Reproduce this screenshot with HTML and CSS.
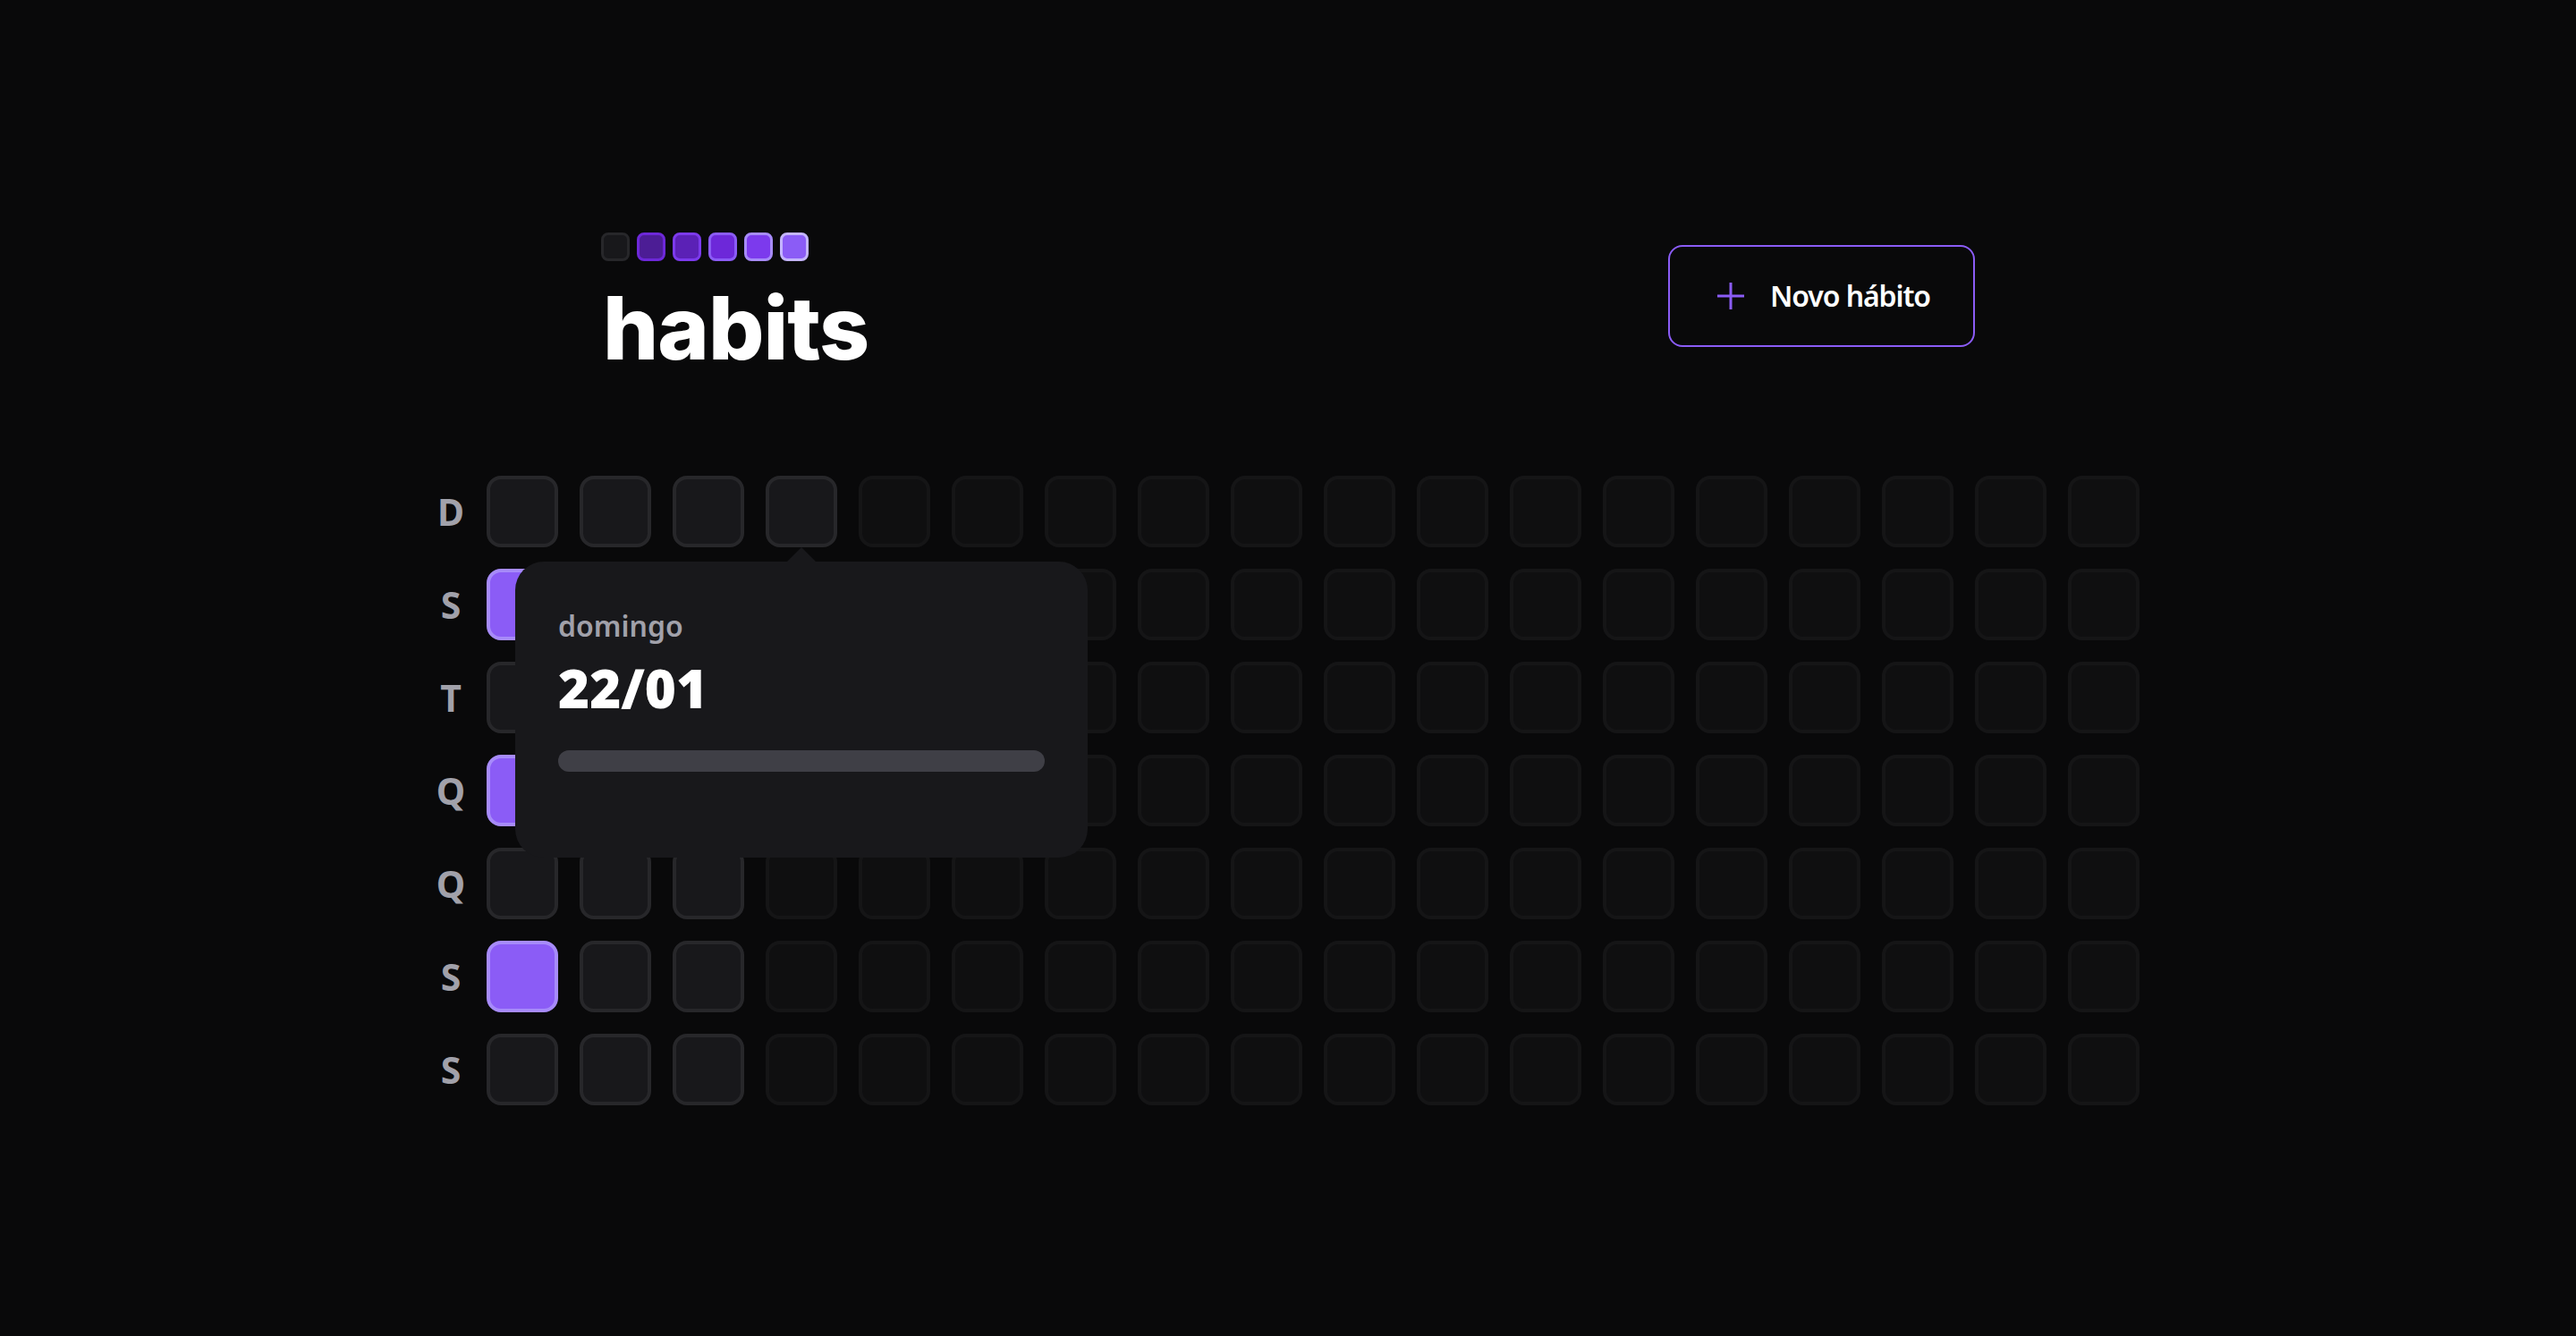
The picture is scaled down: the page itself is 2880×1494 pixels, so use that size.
FILE: index.html
```html
<!DOCTYPE html>
<html lang="pt-BR">
<head>
<meta charset="utf-8">
<title>habits</title>
<link rel="stylesheet" href="styles.css">
</head>
<body>
<main class="app">
  <header class="header">
    <div class="logo">
      <div class="logo-squares">
        <span class="sq sq-0"></span>
        <span class="sq sq-1"></span>
        <span class="sq sq-2"></span>
        <span class="sq sq-3"></span>
        <span class="sq sq-4"></span>
        <span class="sq sq-5"></span>
      </div>
      <div class="logo-text">habits</div>
    </div>
    <button class="new-habit" type="button">
      <svg class="plus" width="40" height="40" viewBox="0 0 40 40" aria-hidden="true">
        <line x1="5" y1="20" x2="35" y2="20" />
        <line x1="20" y1="5" x2="20" y2="35" />
      </svg>
      <span>Novo hábito</span>
    </button>
  </header>

  <section class="summary">
    <div class="weekdays">
      <div class="wd">D</div>
      <div class="wd">S</div>
      <div class="wd">T</div>
      <div class="wd">Q</div>
      <div class="wd">Q</div>
      <div class="wd">S</div>
      <div class="wd">S</div>
    </div>
    <div class="days">
      <div class="day"></div>
      <div class="day done"></div>
      <div class="day"></div>
      <div class="day done"></div>
      <div class="day"></div>
      <div class="day done"></div>
      <div class="day"></div>

      <div class="day"></div>
      <div class="day"></div>
      <div class="day"></div>
      <div class="day"></div>
      <div class="day"></div>
      <div class="day"></div>
      <div class="day"></div>

      <div class="day"></div>
      <div class="day"></div>
      <div class="day"></div>
      <div class="day"></div>
      <div class="day"></div>
      <div class="day"></div>
      <div class="day"></div>

      <div class="day active">
        <div class="popover">
          <span class="popover-arrow"></span>
          <span class="popover-weekday">domingo</span>
          <span class="popover-date">22/01</span>
          <div class="progress"><div class="progress-bar" style="width: 0%"></div></div>
          <div class="habit-list"></div>
        </div>
      </div>
      <div class="day future"></div>
      <div class="day future"></div>
      <div class="day future"></div>
      <div class="day future"></div>
      <div class="day future"></div>
      <div class="day future"></div>

      <div class="day future"></div><div class="day future"></div><div class="day future"></div><div class="day future"></div><div class="day future"></div><div class="day future"></div><div class="day future"></div>
      <div class="day future"></div><div class="day future"></div><div class="day future"></div><div class="day future"></div><div class="day future"></div><div class="day future"></div><div class="day future"></div>
      <div class="day future"></div><div class="day future"></div><div class="day future"></div><div class="day future"></div><div class="day future"></div><div class="day future"></div><div class="day future"></div>
      <div class="day future"></div><div class="day future"></div><div class="day future"></div><div class="day future"></div><div class="day future"></div><div class="day future"></div><div class="day future"></div>
      <div class="day future"></div><div class="day future"></div><div class="day future"></div><div class="day future"></div><div class="day future"></div><div class="day future"></div><div class="day future"></div>
      <div class="day future"></div><div class="day future"></div><div class="day future"></div><div class="day future"></div><div class="day future"></div><div class="day future"></div><div class="day future"></div>
      <div class="day future"></div><div class="day future"></div><div class="day future"></div><div class="day future"></div><div class="day future"></div><div class="day future"></div><div class="day future"></div>
      <div class="day future"></div><div class="day future"></div><div class="day future"></div><div class="day future"></div><div class="day future"></div><div class="day future"></div><div class="day future"></div>
      <div class="day future"></div><div class="day future"></div><div class="day future"></div><div class="day future"></div><div class="day future"></div><div class="day future"></div><div class="day future"></div>
      <div class="day future"></div><div class="day future"></div><div class="day future"></div><div class="day future"></div><div class="day future"></div><div class="day future"></div><div class="day future"></div>
      <div class="day future"></div><div class="day future"></div><div class="day future"></div><div class="day future"></div><div class="day future"></div><div class="day future"></div><div class="day future"></div>
      <div class="day future"></div><div class="day future"></div><div class="day future"></div><div class="day future"></div><div class="day future"></div><div class="day future"></div><div class="day future"></div>
      <div class="day future"></div><div class="day future"></div><div class="day future"></div><div class="day future"></div><div class="day future"></div><div class="day future"></div><div class="day future"></div>
      <div class="day future"></div><div class="day future"></div><div class="day future"></div><div class="day future"></div><div class="day future"></div><div class="day future"></div><div class="day future"></div>
    </div>
  </section>
</main>
</body>
</html>
```

FILE: styles.css
```css
* {
  box-sizing: border-box;
  margin: 0;
  padding: 0;
}

html, body {
  height: 100%;
}

body {
  background: #09090a;
  color: #ffffff;
  font-family: "Noto Sans", "Open Sans", sans-serif;
  display: flex;
  justify-content: center;
  align-items: center;
  min-height: 100vh;
  overflow: hidden;
}

.app {
  width: 2048px;
  padding: 0 48px;
  display: flex;
  flex-direction: column;
  gap: 128px;
}

/* Header */
.header {
  width: 1536px;
  margin: 0 auto;
  display: flex;
  align-items: center;
  justify-content: space-between;
}

.logo {
  height: 146px;
  display: flex;
  flex-direction: column;
  justify-content: space-between;
}

.logo-squares {
  margin-top: 2px;
  display: flex;
  gap: 8px;
}

.sq {
  display: block;
  width: 32px;
  height: 32px;
  border-radius: 8px;
  border: 3px solid;
}

.sq-0 { background: #18181b; border-color: #27272a; }
.sq-1 { background: #4c1d95; border-color: #6d28d9; }
.sq-2 { background: #5b21b6; border-color: #7c3aed; }
.sq-3 { background: #6d28d9; border-color: #8b5cf6; }
.sq-4 { background: #7c3aed; border-color: #a78bfa; }
.sq-5 { background: #8b5cf6; border-color: #c4b5fd; }

.logo-text {
  font-family: "Inter", "Noto Sans", sans-serif;
  font-weight: 800;
  font-size: 98px;
  line-height: 75px;
  letter-spacing: -1px;
  color: #ffffff;
  margin-left: 2px;
}

.new-habit {
  display: flex;
  align-items: center;
  gap: 24px;
  height: 114px;
  padding: 0 48px;
  border: 2px solid #8b5cf6;
  border-radius: 16px;
  background: transparent;
  color: #ffffff;
  font-family: "Noto Sans", "Open Sans", sans-serif;
  font-weight: 600;
  font-size: 32px;
  line-height: 48px;
  letter-spacing: -1.1px;
}

.plus {
  display: block;
  width: 40px;
  height: 40px;
}

.plus line {
  stroke: #8b5cf6;
  stroke-width: 3;
}

/* Summary table */
.summary {
  display: flex;
}

.weekdays {
  display: grid;
  grid-template-rows: repeat(7, 80px);
  gap: 24px;
}

.wd {
  width: 80px;
  height: 80px;
  display: flex;
  align-items: center;
  justify-content: center;
  color: #a1a1aa;
  font-size: 41px;
  font-weight: 700;
}

.days {
  display: grid;
  grid-template-rows: repeat(7, 80px);
  grid-auto-flow: column;
  grid-auto-columns: 80px;
  gap: 24px;
}

.day {
  width: 80px;
  height: 80px;
  border-radius: 16px;
  border: 4px solid #27272a;
  background: #18181b;
}

.day.done {
  background: #8b5cf6;
  border-color: #a78bfa;
}

.day.future {
  opacity: 0.4;
}

.day.active {
  position: relative;
}

/* Popover */
.popover {
  position: absolute;
  z-index: 10;
  left: 50%;
  top: calc(100% + 20px);
  transform: translateX(-50%);
  width: 640px;
  padding: 48px;
  border-radius: 32px;
  background: #18181b;
  display: flex;
  flex-direction: column;
}

.popover-arrow {
  position: absolute;
  top: -16px;
  left: 50%;
  margin-left: -16px;
  width: 0;
  height: 0;
  border-left: 16px solid transparent;
  border-right: 16px solid transparent;
  border-bottom: 16px solid #18181b;
}

.popover-weekday {
  font-size: 32px;
  line-height: 48px;
  font-weight: 600;
  color: #a1a1aa;
}

.popover-date {
  margin-top: 8px;
  font-size: 60px;
  line-height: 75px;
  font-weight: 900;
  color: #ffffff;
}

.progress {
  margin-top: 32px;
  height: 24px;
  border-radius: 24px;
  background: #3f3f46;
  overflow: hidden;
}

.progress-bar {
  height: 100%;
  background: #7c3aed;
}

.habit-list {
  margin-top: 48px;
  display: flex;
  flex-direction: column;
  gap: 24px;
}
```
